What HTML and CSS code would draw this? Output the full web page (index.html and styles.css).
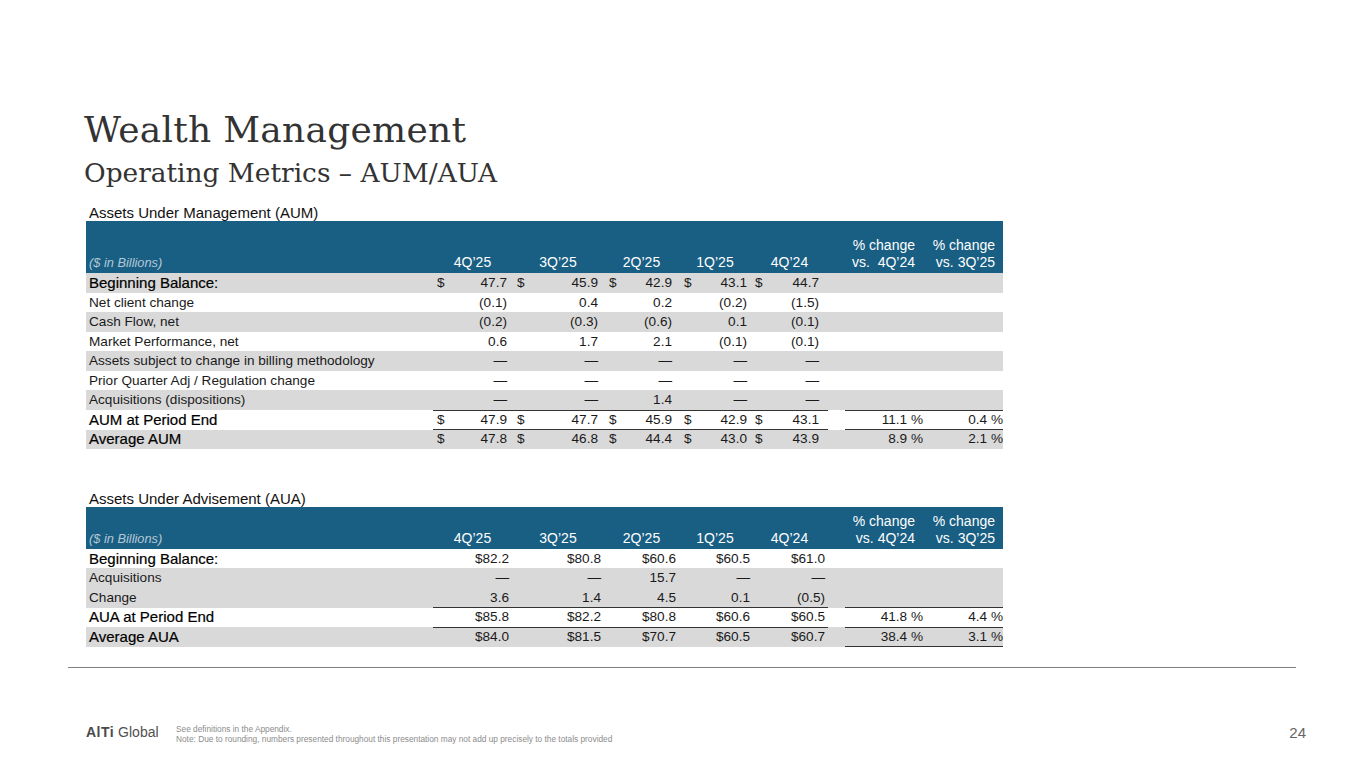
FILE: index.html
```html
<!DOCTYPE html>
<html lang="en">
<head>
<meta charset="utf-8">
<title>Wealth Management – Operating Metrics – AUM/AUA</title>
<link rel="stylesheet" href="styles.css">
</head>
<body>
<main class="slide">
  <header class="titles">
    <h1 class="title">Wealth Management</h1>
    <h2 class="subtitle">Operating Metrics – AUM/AUA</h2>
  </header>

  <section class="block block-aum">
    <div class="caption">Assets Under Management (AUM)</div>
    <table class="data">
      <colgroup>
        <col class="c-label"><col class="c-q1"><col class="c-q2"><col class="c-q3"><col class="c-q4"><col class="c-q5"><col class="c-gap"><col class="c-p1"><col class="c-p2">
      </colgroup>
      <thead>
        <tr class="head head-tall">
          <th class="h-label">($ in Billions)</th>
          <th>4Q’25</th><th>3Q’25</th><th>2Q’25</th><th>1Q’25</th><th>4Q’24</th>
          <th></th>
          <th class="h-pct">% change<br>vs.&nbsp; 4Q’24</th>
          <th class="h-pct">% change<br>vs. 3Q’25</th>
        </tr>
      </thead>
      <tbody>
        <tr class="shade strong">
          <td class="label">Beginning Balance:</td>
          <td><span class="cur">$</span>47.7</td><td><span class="cur">$</span>45.9</td><td><span class="cur">$</span>42.9</td><td><span class="cur">$</span>43.1</td><td><span class="cur">$</span>44.7</td>
          <td></td><td></td><td></td>
        </tr>
        <tr>
          <td class="label">Net client change</td>
          <td>(0.1)</td><td>0.4</td><td>0.2</td><td>(0.2)</td><td>(1.5)</td>
          <td></td><td></td><td></td>
        </tr>
        <tr class="shade">
          <td class="label">Cash Flow, net</td>
          <td>(0.2)</td><td>(0.3)</td><td>(0.6)</td><td>0.1</td><td>(0.1)</td>
          <td></td><td></td><td></td>
        </tr>
        <tr>
          <td class="label">Market Performance, net</td>
          <td>0.6</td><td>1.7</td><td>2.1</td><td>(0.1)</td><td>(0.1)</td>
          <td></td><td></td><td></td>
        </tr>
        <tr class="shade">
          <td class="label">Assets subject to change in billing methodology</td>
          <td class="dash">—</td><td class="dash">—</td><td class="dash">—</td><td class="dash">—</td><td class="dash">—</td>
          <td></td><td></td><td></td>
        </tr>
        <tr>
          <td class="label">Prior Quarter Adj / Regulation change</td>
          <td class="dash">—</td><td class="dash">—</td><td class="dash">—</td><td class="dash">—</td><td class="dash">—</td>
          <td></td><td></td><td></td>
        </tr>
        <tr class="shade">
          <td class="label">Acquisitions (dispositions)</td>
          <td class="dash">—</td><td class="dash">—</td><td>1.4</td><td class="dash">—</td><td class="dash">—</td>
          <td></td><td></td><td></td>
        </tr>
        <tr class="strong total">
          <td class="label">AUM at Period End</td>
          <td><span class="cur">$</span>47.9</td><td><span class="cur">$</span>47.7</td><td><span class="cur">$</span>45.9</td><td><span class="cur">$</span>42.9</td><td><span class="cur">$</span>43.1</td>
          <td class="gap"></td><td class="pct">11.1 %</td><td class="pct">0.4 %</td>
        </tr>
        <tr class="shade strong total">
          <td class="label">Average AUM</td>
          <td><span class="cur">$</span>47.8</td><td><span class="cur">$</span>46.8</td><td><span class="cur">$</span>44.4</td><td><span class="cur">$</span>43.0</td><td><span class="cur">$</span>43.9</td>
          <td class="gap"></td><td class="pct">8.9 %</td><td class="pct">2.1 %</td>
        </tr>
      </tbody>
    </table>
  </section>

  <section class="block block-aua">
    <div class="caption">Assets Under Advisement (AUA)</div>
    <table class="data">
      <colgroup>
        <col class="c-label"><col class="c-q1"><col class="c-q2"><col class="c-q3"><col class="c-q4"><col class="c-q5"><col class="c-gap"><col class="c-p1"><col class="c-p2">
      </colgroup>
      <thead>
        <tr class="head">
          <th class="h-label">($ in Billions)</th>
          <th>4Q’25</th><th>3Q’25</th><th>2Q’25</th><th>1Q’25</th><th>4Q’24</th>
          <th></th>
          <th class="h-pct">% change<br>vs. 4Q’24</th>
          <th class="h-pct">% change<br>vs. 3Q’25</th>
        </tr>
      </thead>
      <tbody>
        <tr class="strong">
          <td class="label">Beginning Balance:</td>
          <td>$82.2</td><td>$80.8</td><td>$60.6</td><td>$60.5</td><td>$61.0</td>
          <td></td><td></td><td></td>
        </tr>
        <tr class="shade">
          <td class="label">Acquisitions</td>
          <td class="dash">—</td><td class="dash">—</td><td>15.7</td><td class="dash">—</td><td class="dash">—</td>
          <td></td><td></td><td></td>
        </tr>
        <tr class="shade">
          <td class="label">Change</td>
          <td>3.6</td><td>1.4</td><td>4.5</td><td>0.1</td><td>(0.5)</td>
          <td></td><td></td><td></td>
        </tr>
        <tr class="strong total">
          <td class="label">AUA at Period End</td>
          <td>$85.8</td><td>$82.2</td><td>$80.8</td><td>$60.6</td><td>$60.5</td>
          <td class="gap"></td><td class="pct">41.8 %</td><td class="pct">4.4 %</td>
        </tr>
        <tr class="shade strong total last">
          <td class="label">Average AUA</td>
          <td>$84.0</td><td>$81.5</td><td>$70.7</td><td>$60.5</td><td>$60.7</td>
          <td class="gap"></td><td class="pct">38.4 %</td><td class="pct">3.1 %</td>
        </tr>
      </tbody>
    </table>
  </section>

  <hr class="rule">

  <footer class="footer">
    <div class="logo"><b>AlTi</b> Global</div>
    <div class="notes">
      <p>See definitions in the Appendix.</p>
      <p>Note: Due to rounding, numbers presented throughout this presentation may not add up precisely to the totals provided</p>
    </div>
    <div class="page">24</div>
  </footer>
</main>
</body>
</html>
```

FILE: styles.css
```css
* { box-sizing: border-box; }

html, body {
  margin: 0;
  padding: 0;
  background: #ffffff;
}

body {
  font-family: "Liberation Sans", Arial, sans-serif;
  color: #111111;
}

.slide {
  width: 1365px;
  height: 768px;
  overflow: hidden;
  padding-top: 110px;
}

/* ---------- titles ---------- */
.titles {
  padding-left: 84px;
}

.title {
  margin: 0;
  font-family: "DejaVu Serif", serif;
  font-weight: normal;
  font-size: 36px;
  line-height: 40px;
  letter-spacing: 0.25px;
  color: #333333;
}

.subtitle {
  margin: 8px 0 0;
  font-family: "DejaVu Serif", serif;
  font-weight: normal;
  font-size: 26.4px;
  line-height: 30px;
  color: #333333;
}

/* ---------- table blocks ---------- */
.block {
  margin-left: 86px;
  width: 917px;
}

.block-aum { margin-top: 16px; }
.block-aua { margin-top: 41px; }

.caption {
  padding-left: 3px;
  font-size: 15px;
  line-height: 17px;
  color: #111111;
}

.data {
  width: 917px;
  border-collapse: collapse;
  table-layout: fixed;
  font-size: 13.6px;
}

.c-label { width: 347px; }
.c-q1 { width: 79px; }
.c-q2 { width: 92px; }
.c-q3 { width: 75px; }
.c-q4 { width: 72px; }
.c-q5 { width: 77px; }
.c-gap { width: 17px; }
.c-p1 { width: 78px; }
.c-p2 { width: 80px; }

/* header */
.head {
  background: #195e83;
  color: #ffffff;
  height: 42px;
}

.head-tall { height: 52px; }

.head th {
  padding: 0 0 2px;
  font-size: 14px;
  font-weight: normal;
  line-height: 17px;
  text-align: center;
  vertical-align: bottom;
  white-space: nowrap;
}

.head th.h-label {
  padding-left: 3px;
  text-align: left;
  font-style: italic;
  font-size: 12.8px;
  color: #b4c8d6;
}

.head th.h-pct {
  text-align: right;
  padding-right: 8px;
}

/* body rows */
.data tbody tr { height: 19.5px; }

.data tbody td {
  padding: 0;
  line-height: 19.5px;
  height: 19.5px;
  text-align: right;
  white-space: nowrap;
  color: #1a1a1a;
}

.data tbody tr.total { height: 18.5px; }

.data tbody tr.total td {
  height: 18.5px;
  line-height: 18.5px;
}

.data tbody tr.shade { background: #d9d9d9; }

.data tbody td.label {
  padding-left: 3px;
  text-align: left;
}

.strong td.label {
  font-size: 15px;
  color: #000000;
  -webkit-text-stroke: 0.2px #000000;
}

.cur { float: left; }

.dash { color: #555555; }

/* quarter column alignment */
.data tbody td:nth-child(2) { padding-left: 4px; padding-right: 5px; }
.data tbody td:nth-child(3) { padding-left: 5px; padding-right: 6px; }
.data tbody td:nth-child(4) { padding-left: 5px; padding-right: 7px; }
.data tbody td:nth-child(5) { padding-left: 5px; padding-right: 4px; }
.data tbody td:nth-child(6) { padding-left: 4px; padding-right: 9px; }

.block-aua .data tbody td:nth-child(2) { padding-right: 3px; }
.block-aua .data tbody td:nth-child(3) { padding-right: 3px; }
.block-aua .data tbody td:nth-child(4) { padding-right: 3px; }
.block-aua .data tbody td:nth-child(5) { padding-right: 1px; }
.block-aua .data tbody td:nth-child(6) { padding-right: 3px; }

.data tbody td.pct { padding-right: 0; }

/* total rules */
.total td { border-top: 1px solid #333333; }
.total td.label,
.total td.gap { border-top: 0; }
.last td.pct { border-bottom: 1px solid #333333; }

/* ---------- footer ---------- */
.rule {
  margin: 20px 0 0 68px;
  width: 1228px;
  height: 1px;
  border: 0;
  background: #808080;
}

.footer {
  display: flex;
  align-items: flex-start;
  margin-top: 56px;
  padding-left: 86px;
  padding-right: 59px;
}

.logo {
  width: 90px;
  font-size: 14px;
  line-height: 17px;
  color: #505050;
}

.logo b {
  font-weight: bold;
  letter-spacing: 0.5px;
  color: #4a4a4a;
}

.notes {
  flex: 1;
  padding-top: 1px;
  font-size: 8.3px;
  line-height: 9.5px;
  color: #8c8c8c;
}

.notes p { margin: 0; }

.page {
  font-size: 15px;
  line-height: 17px;
  color: #666666;
}
```
